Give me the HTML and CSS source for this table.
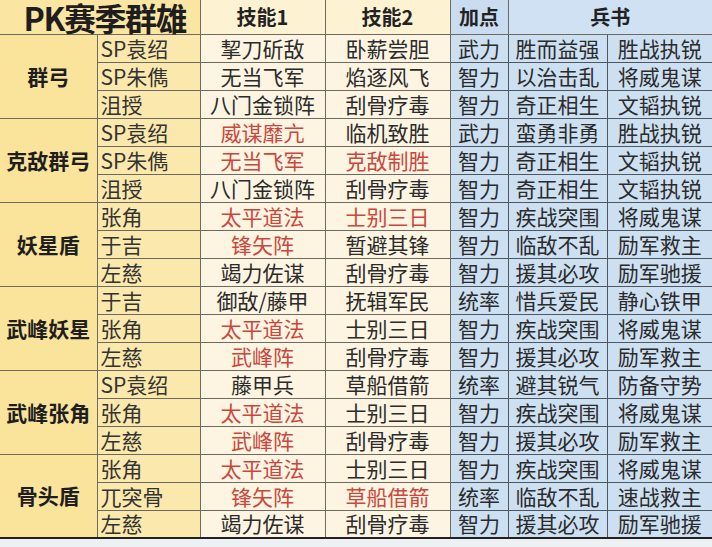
FILE: index.html
```html
<!DOCTYPE html>
<html lang="zh">
<head>
<meta charset="utf-8">
<link rel="stylesheet" href="styles.css">
</head>
<body>
<table class="pk">
<colgroup>
<col class="c1"><col class="c2"><col class="c3"><col class="c4"><col class="c5"><col class="c6"><col class="c7">
</colgroup>
<thead>
<tr class="head">
<th colspan="2" class="title">PK赛季群雄</th>
<th class="hs">技能1</th>
<th class="hs">技能2</th>
<th class="hb">加点</th>
<th colspan="2" class="hb2">兵书</th>
</tr>
</thead>
<tbody>
<tr class="first"><td rowspan="3" class="grp">群弓</td><td class="name">SP袁绍</td><td class="sk">挈刀斫敌</td><td class="sk">卧薪尝胆</td><td class="bl">武力</td><td class="bl">胜而益强</td><td class="bl">胜战执锐</td></tr>
<tr><td class="name">SP朱儁</td><td class="sk">无当飞军</td><td class="sk">焰逐风飞</td><td class="bl">智力</td><td class="bl">以治击乱</td><td class="bl">将威鬼谋</td></tr>
<tr><td class="name">沮授</td><td class="sk">八门金锁阵</td><td class="sk">刮骨疗毒</td><td class="bl">智力</td><td class="bl">奇正相生</td><td class="bl">文韬执锐</td></tr>

<tr class="first"><td rowspan="3" class="grp">克敌群弓</td><td class="name">SP袁绍</td><td class="sk red">威谋靡亢</td><td class="sk">临机致胜</td><td class="bl">武力</td><td class="bl">蛮勇非勇</td><td class="bl">胜战执锐</td></tr>
<tr><td class="name">SP朱儁</td><td class="sk red">无当飞军</td><td class="sk red">克敌制胜</td><td class="bl">智力</td><td class="bl">奇正相生</td><td class="bl">文韬执锐</td></tr>
<tr><td class="name">沮授</td><td class="sk">八门金锁阵</td><td class="sk">刮骨疗毒</td><td class="bl">智力</td><td class="bl">奇正相生</td><td class="bl">文韬执锐</td></tr>

<tr class="first"><td rowspan="3" class="grp">妖星盾</td><td class="name">张角</td><td class="sk red">太平道法</td><td class="sk red">士别三日</td><td class="bl">智力</td><td class="bl">疾战突围</td><td class="bl">将威鬼谋</td></tr>
<tr><td class="name">于吉</td><td class="sk red">锋矢阵</td><td class="sk">暂避其锋</td><td class="bl">智力</td><td class="bl">临敌不乱</td><td class="bl">励军救主</td></tr>
<tr><td class="name">左慈</td><td class="sk">竭力佐谋</td><td class="sk">刮骨疗毒</td><td class="bl">智力</td><td class="bl">援其必攻</td><td class="bl">励军驰援</td></tr>

<tr class="first"><td rowspan="3" class="grp">武峰妖星</td><td class="name">于吉</td><td class="sk">御敌/藤甲</td><td class="sk">抚辑军民</td><td class="bl">统率</td><td class="bl">惜兵爱民</td><td class="bl">静心铁甲</td></tr>
<tr><td class="name">张角</td><td class="sk red">太平道法</td><td class="sk">士别三日</td><td class="bl">智力</td><td class="bl">疾战突围</td><td class="bl">将威鬼谋</td></tr>
<tr><td class="name">左慈</td><td class="sk red">武峰阵</td><td class="sk">刮骨疗毒</td><td class="bl">智力</td><td class="bl">援其必攻</td><td class="bl">励军救主</td></tr>

<tr class="first"><td rowspan="3" class="grp">武峰张角</td><td class="name">SP袁绍</td><td class="sk">藤甲兵</td><td class="sk">草船借箭</td><td class="bl">统率</td><td class="bl">避其锐气</td><td class="bl">防备守势</td></tr>
<tr><td class="name">张角</td><td class="sk red">太平道法</td><td class="sk">士别三日</td><td class="bl">智力</td><td class="bl">疾战突围</td><td class="bl">将威鬼谋</td></tr>
<tr><td class="name">左慈</td><td class="sk red">武峰阵</td><td class="sk">刮骨疗毒</td><td class="bl">智力</td><td class="bl">援其必攻</td><td class="bl">励军救主</td></tr>

<tr class="first"><td rowspan="3" class="grp">骨头盾</td><td class="name">张角</td><td class="sk red">太平道法</td><td class="sk">士别三日</td><td class="bl">智力</td><td class="bl">疾战突围</td><td class="bl">将威鬼谋</td></tr>
<tr><td class="name">兀突骨</td><td class="sk red">锋矢阵</td><td class="sk red">草船借箭</td><td class="bl">统率</td><td class="bl">临敌不乱</td><td class="bl">速战救主</td></tr>
<tr class="last"><td class="name">左慈</td><td class="sk">竭力佐谋</td><td class="sk">刮骨疗毒</td><td class="bl">智力</td><td class="bl">援其必攻</td><td class="bl">励军驰援</td></tr>
</tbody>
</table>
</body>
</html>
```
FILE: styles.css
```css
html, body {
  margin: 0;
  padding: 0;
  background: #eef1f4;
}
body {
  font-family: "Noto Sans CJK SC", "Noto Sans", sans-serif;
  color: #2b2b2b;
  width: 712px;
  height: 547px;
  overflow: hidden;
}
.pk {
  width: 712px;
  table-layout: fixed;
  border-collapse: collapse;
  border-bottom: 2px solid #222;
}
.c1 { width: 97px; }
.c2 { width: 103px; }
.c3 { width: 125px; }
.c4 { width: 125px; }
.c5 { width: 58px; }
.c6 { width: 99px; }
.c7 { width: 105px; }

.pk th, .pk td {
  padding: 0;
  border: 1px solid #6e6a60;
  text-align: center;
  vertical-align: middle;
  line-height: 1;
  white-space: nowrap;
}
.pk tr > :first-child { border-left: none; }
.pk tr > :last-child { border-right: none; }
.pk thead th { border-top: none; }

.head { height: 34px; }
.pk tbody tr { height: 28px; }

.title {
  background: #fae5a2;
  font-size: 32px;
  font-weight: 700;
  color: #1e1e1e;
  text-align: left;
  padding-left: 10px !important;
  letter-spacing: -1.5px;
}
.hs {
  background: #fdf2d2;
  font-size: 20px;
  font-weight: 700;
  color: #222;
}
.hb, .hb2 {
  background: #c9dcf0;
  font-size: 20px;
  font-weight: 700;
  color: #222;
}
.hb2 { background: #cfe1f3; }

.grp {
  background: #fae39b;
  font-size: 21px;
  font-weight: 700;
  color: #1e1e1e;
}
.name {
  background: #fbe8ac;
  font-size: 21px;
  text-align: left !important;
  padding-left: 3px !important;
  color: #333;
}
.sk {
  background: #fdf5e2;
  font-size: 21px;
  color: #2b2b2b;
}
.sk.red { color: #c9473d; }
.bl {
  background: #cde0f2;
  font-size: 21px;
  color: #2b2b2b;
  border-color: #4f5760 !important;
}
.pk td.sk + td.bl { border-left-color: #8a8a86 !important; }
```
